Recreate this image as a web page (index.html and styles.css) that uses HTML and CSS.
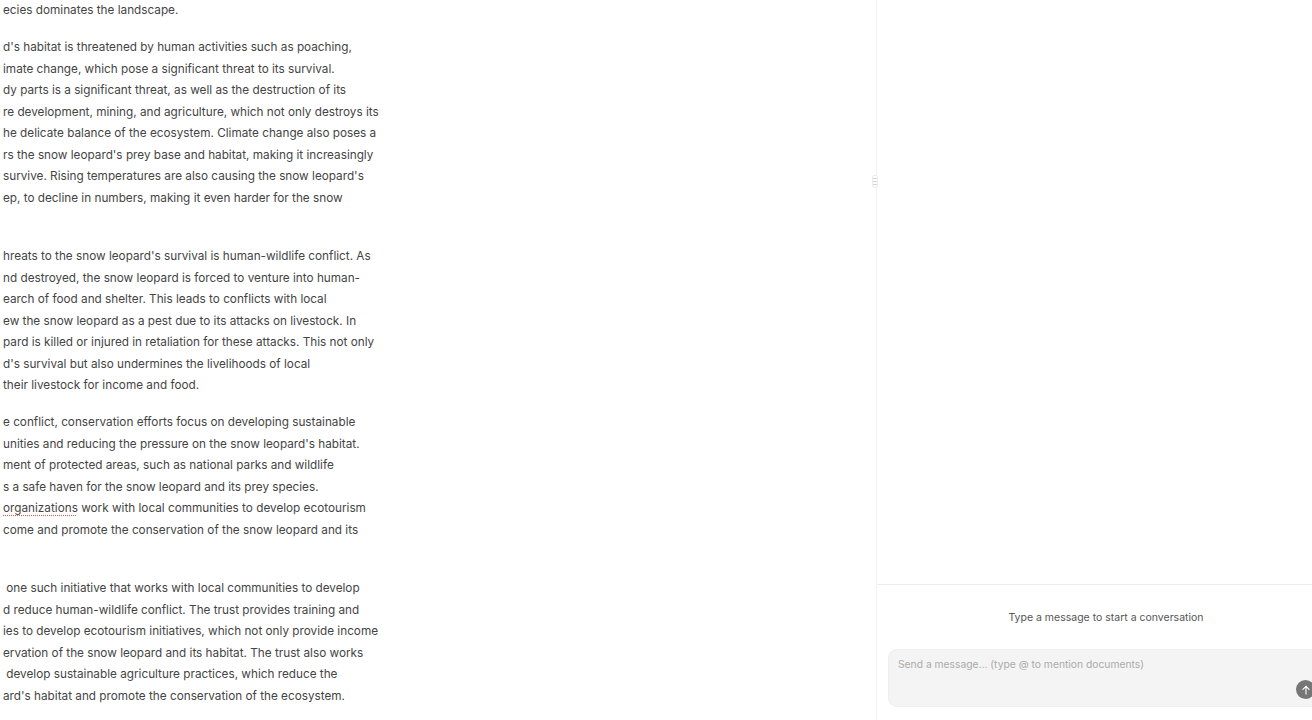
FILE: index.html
```html
<!DOCTYPE html>
<html lang="en">
<head>
    <meta charset="UTF-8">
    <meta name="viewport" content="width=device-width, initial-scale=1.0">
    <title>Document Chat</title>
    <link rel="stylesheet" href="styles.css">
</head>
<body>
    <div class="workspace">
        <div class="doc-pane">
            <div class="doc-text">
                <p>
                    <span class="line">ecies dominates the landscape.</span>
                </p>
                <p>
                    <span class="line">d's habitat is threatened by human activities such as poaching,</span>
                    <span class="line">imate change, which pose a significant threat to its survival.</span>
                    <span class="line">dy parts is a significant threat, as well as the destruction of its</span>
                    <span class="line">re development, mining, and agriculture, which not only destroys its</span>
                    <span class="line">he delicate balance of the ecosystem. Climate change also poses a</span>
                    <span class="line">rs the snow leopard's prey base and habitat, making it increasingly</span>
                    <span class="line">survive. Rising temperatures are also causing the snow leopard's</span>
                    <span class="line">ep, to decline in numbers, making it even harder for the snow</span>
                    <span class="line">&nbsp;</span>
                </p>
                <p>
                    <span class="line">hreats to the snow leopard's survival is human-wildlife conflict. As</span>
                    <span class="line">nd destroyed, the snow leopard is forced to venture into human-</span>
                    <span class="line">earch of food and shelter. This leads to conflicts with local</span>
                    <span class="line">ew the snow leopard as a pest due to its attacks on livestock. In</span>
                    <span class="line">pard is killed or injured in retaliation for these attacks. This not only</span>
                    <span class="line">d's survival but also undermines the livelihoods of local</span>
                    <span class="line">their livestock for income and food.</span>
                </p>
                <p>
                    <span class="line">e conflict, conservation efforts focus on developing sustainable</span>
                    <span class="line">unities and reducing the pressure on the snow leopard's habitat.</span>
                    <span class="line">ment of protected areas, such as national parks and wildlife</span>
                    <span class="line">s a safe haven for the snow leopard and its prey species.</span>
                    <span class="line"><span class="misspelled">organizations</span> work with local communities to develop ecotourism</span>
                    <span class="line">come and promote the conservation of the snow leopard and its</span>
                    <span class="line">&nbsp;</span>
                </p>
                <p>
                    <span class="line">&nbsp;one such initiative that works with local communities to develop</span>
                    <span class="line">d reduce human-wildlife conflict. The trust provides training and</span>
                    <span class="line">ies to develop ecotourism initiatives, which not only provide income</span>
                    <span class="line">ervation of the snow leopard and its habitat. The trust also works</span>
                    <span class="line">&nbsp;develop sustainable agriculture practices, which reduce the</span>
                    <span class="line">ard's habitat and promote the conservation of the ecosystem.</span>
                </p>
            </div>
        </div>

        <div class="divider">
            <span class="grip"></span>
        </div>

        <div class="chat-pane">
            <div class="chat-history"></div>
            <div class="chat-empty">Type a message to start a conversation</div>
            <div class="composer">
                <div class="composer-box">
                    <textarea class="composer-input" placeholder="Send a message... (type @ to mention documents)"></textarea>
                    <button class="send-button" type="button" aria-label="Send">
                        <svg width="12" height="12" viewBox="0 0 12 12" fill="none" stroke="#fff" stroke-width="1.1" stroke-linecap="round" stroke-linejoin="round">
                            <path d="M6 10V2.3"/>
                            <path d="M2.9 5.4L6 2.3l3.1 3.1"/>
                        </svg>
                    </button>
                </div>
            </div>
        </div>
    </div>
</body>
</html>
```

FILE: styles.css
```css
html, body {
    margin: 0;
    height: 100%;
    overflow: hidden;
    background: #fff;
}
body {
    font-family: Inter, "Noto Sans", sans-serif;
}
.workspace {
    display: flex;
    height: 720px;
}
.doc-pane {
    width: 876px;
    flex: none;
    overflow: hidden;
}
.doc-text {
    padding: 0 0 0 3px;
    margin-top: 0;
    font-size: 11.75px;
    line-height: 21.5px;
    color: #444;
}
.doc-text p {
    margin: 0 0 15.5px;
}
.line {
    display: block;
    white-space: pre;
}
.misspelled {
    text-decoration: underline dotted #e06060;
    text-underline-offset: 3px;
}
.divider {
    width: 1px;
    flex: none;
    background: #f3f3f3;
    position: relative;
}
.grip {
    position: absolute;
    left: -4px;
    top: 175px;
    width: 4px;
    height: 11px;
    border: 1px solid #ececec;
    border-radius: 2px;
    background: repeating-linear-gradient(#fff 0 2px, #d6d6d6 2px 3px);
}
.chat-pane {
    width: 458px;
    flex: none;
    display: flex;
    flex-direction: column;
}
.chat-history {
    height: 584px;
    border-bottom: 1px solid #ededed;
}
.chat-empty {
    text-align: center;
    font-size: 10.5px;
    color: #555;
    padding: 26px 0 0;
    height: 38px;
}
.composer {
    padding: 0 11px 0 11px;
}
.composer-box {
    position: relative;
    height: 58px;
    background: #f4f4f4;
    border: 1px solid #eeeeee;
    border-radius: 9px;
    box-sizing: border-box;
}
.composer-input {
    width: 100%;
    height: 100%;
    box-sizing: border-box;
    border: none;
    background: transparent;
    resize: none;
    outline: none;
    padding: 8px 9px;
    font-family: inherit;
    font-size: 10.3px;
    color: #333;
}
.composer-input::placeholder {
    color: #ababab;
}
.send-button {
    position: absolute;
    right: 8px;
    bottom: 7px;
    width: 19px;
    height: 19px;
    padding: 0;
    border: none;
    border-radius: 50%;
    background: #767676;
    display: flex;
    align-items: center;
    justify-content: center;
}
```
